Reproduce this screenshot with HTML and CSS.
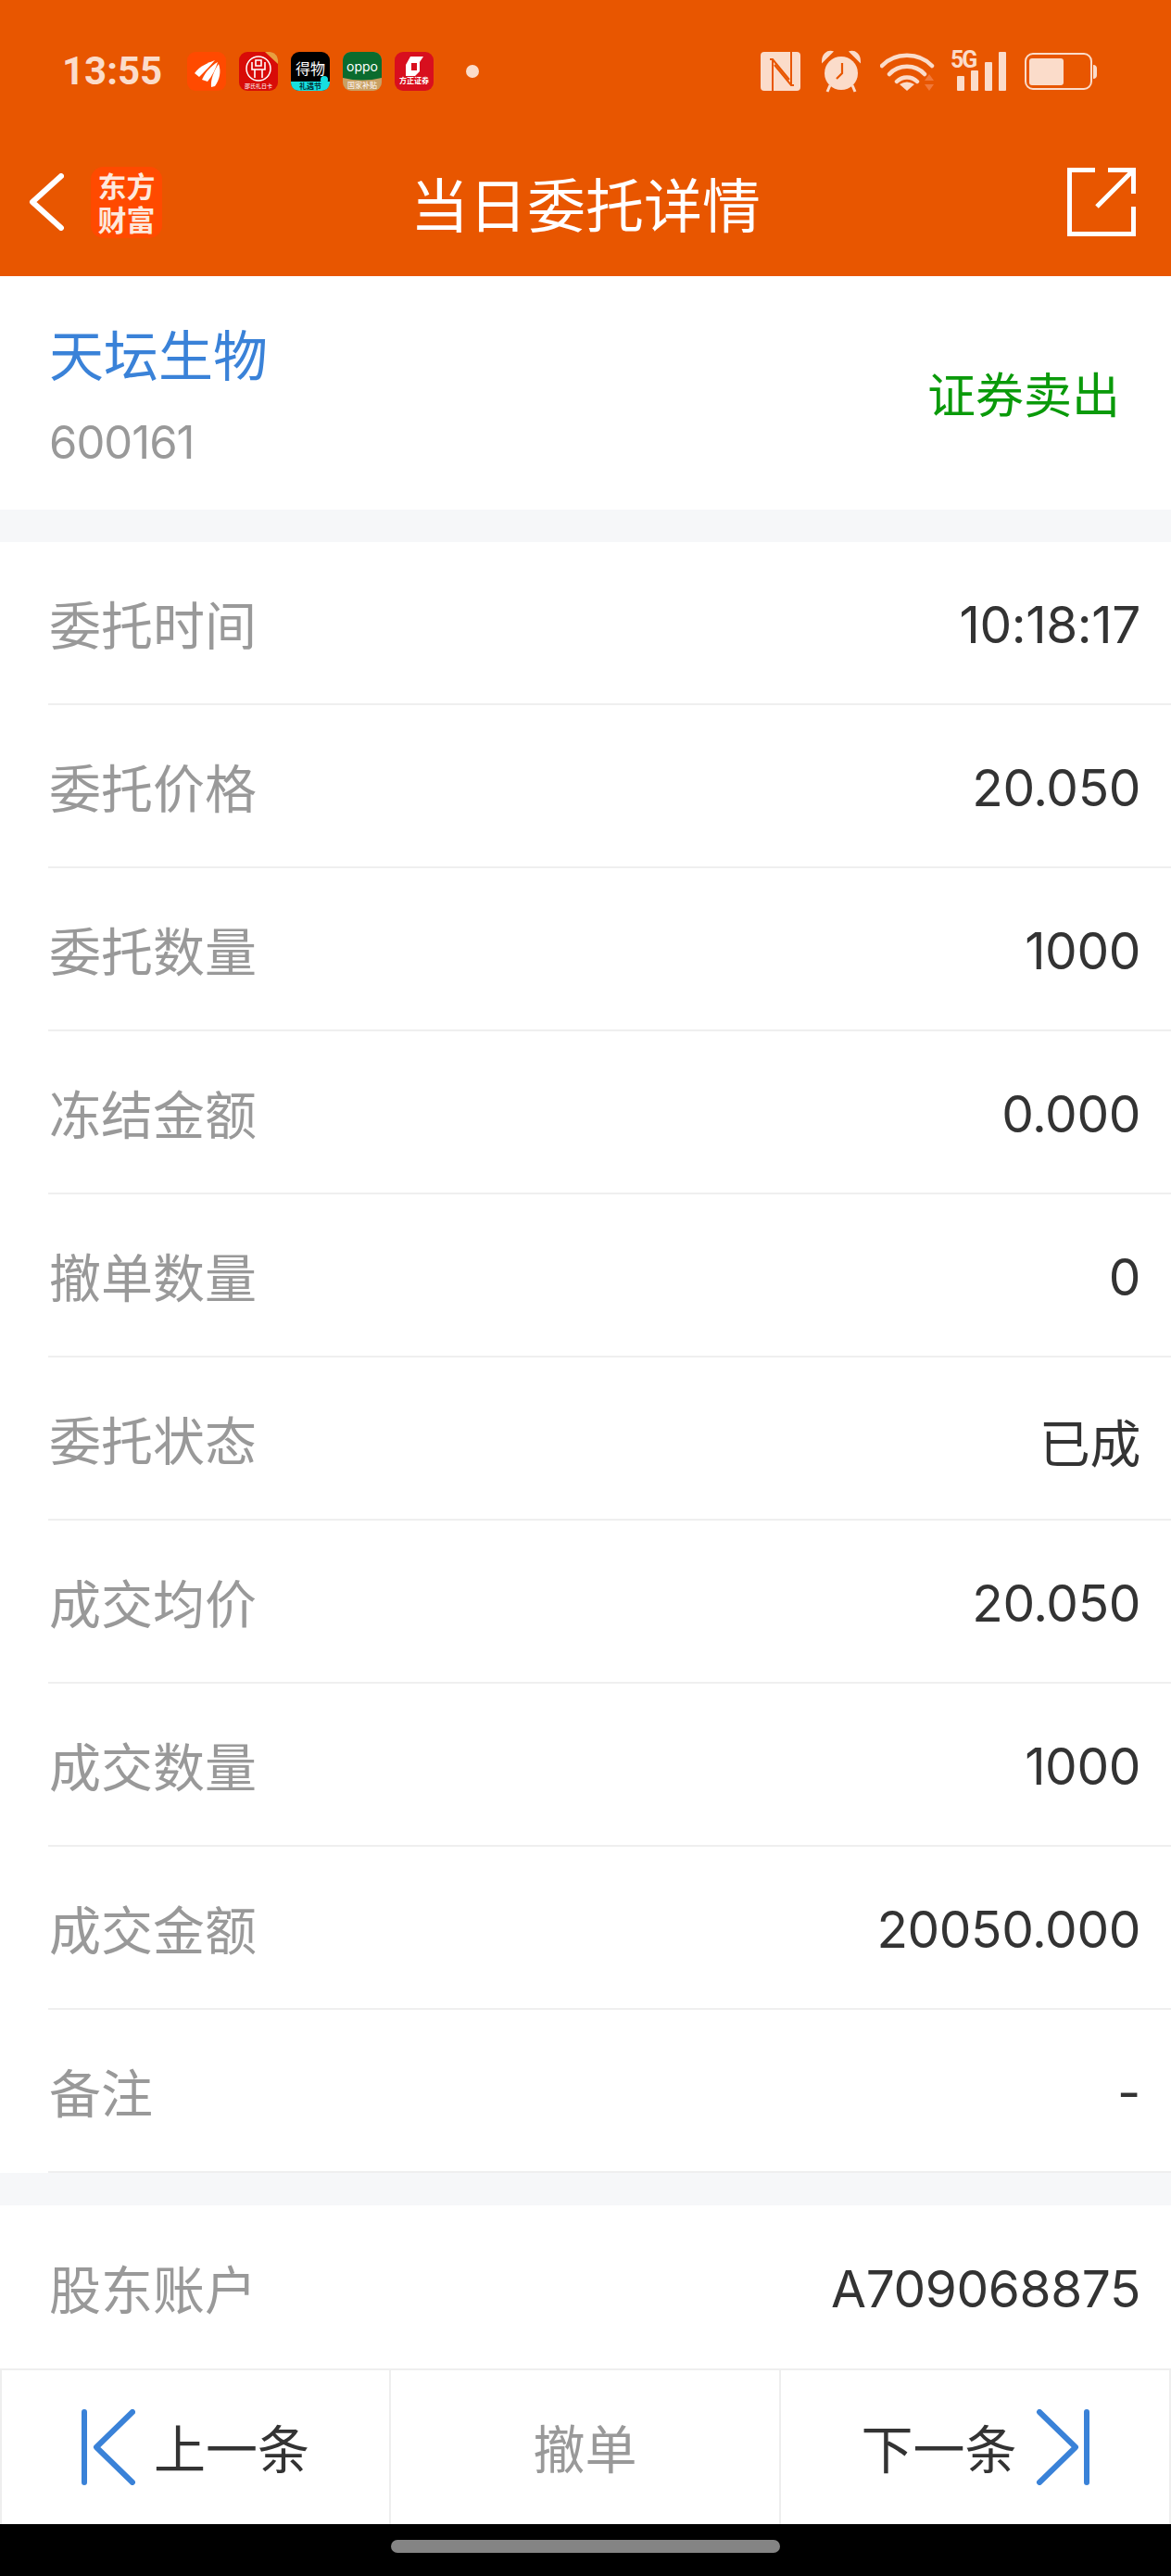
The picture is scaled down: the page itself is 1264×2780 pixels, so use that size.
FILE: index.html
```html
<!DOCTYPE html>
<html lang="zh-CN">
<head>
<meta charset="utf-8">
<title>当日委托详情</title>
<link rel="stylesheet" href="styles.css">
</head>
<body>
<div class="app">
  <header class="top">
    <div class="status">
      <span class="clock">13:55</span>
      <div class="apps">
        <svg class="app-icon" viewBox="0 0 42 42"><rect width="42" height="42" rx="9" fill="#ff4a00"/><path d="M8 23C14 15 22 12 30 9C25 15 19 21 13 27Z" fill="#fff"/><path d="M16 30C20 21 26 15 33 11C31 18 27 26 22 32Z" fill="#fff"/><path d="M26 38C25 30 29 20 34 13C37 21 35 30 30 37Z" fill="#fff"/></svg>
        <svg class="app-icon" viewBox="0 0 42 42"><rect width="42" height="42" rx="9" fill="#d80c08"/><path d="M28 0H33C38 0 42 4 42 9V13Z" fill="#e8a040"/><circle cx="21" cy="18" r="13" fill="none" stroke="#fff" stroke-width="1.5"/><path d="M14 11V19H28V11M17 19V28M25 19V28M18 9H24V15H18Z" fill="none" stroke="#fff" stroke-width="1.6"/><text class="mini" x="21" y="39" font-size="6">邵氏礼日卡</text></svg>
        <svg class="app-icon" viewBox="0 0 42 42"><rect width="42" height="42" rx="9" fill="#000"/><path d="M0 32H42V33C42 38 38 42 33 42H9C4 42 0 38 0 33Z" fill="#16dfe0"/><circle cx="36" cy="30" r="4" fill="#16dfe0"/><text class="mini" x="21" y="24" font-size="16" fill="#fff">得物</text><text class="mini dark" x="21" y="40" font-size="8">礼遇节</text></svg>
        <svg class="app-icon" viewBox="0 0 42 42"><rect width="42" height="42" rx="9" fill="#c9a063"/><path d="M0 9C0 4 4 0 9 0H33C38 0 42 4 42 9V28Q21 33 0 28Z" fill="#0b6b2e"/><text class="mini oppo" x="21" y="21" font-size="14">oppo</text><text class="mini" x="21" y="39" font-size="8">国家补贴</text></svg>
        <svg class="app-icon" viewBox="0 0 42 42"><rect width="42" height="42" rx="9" fill="#d80f1e"/><path d="M17 5H31L27 11V21L22 26H12V14Z" fill="#fff"/><path d="M18 12H24V20H18Z" fill="#d80f1e"/><text class="mini strong" x="21" y="34" font-size="8">方正证券</text></svg>
      </div>
      <span class="dot"></span>
      <div class="sys">
        <svg class="sys-nfc" viewBox="0 0 43 42"><rect width="43" height="42" rx="4" fill="#fbdcca"/><path d="M13 42V8M10 8H13L31 30M33 0V36M36 36H33L15 14" fill="none" stroke="#e85600" stroke-width="2"/></svg>
        <svg class="sys-alarm" viewBox="0 0 44 46"><path d="M2 12C2 5 7 1 12 2ZM42 12C42 5 37 1 32 2Z" fill="#fbdcca" stroke="#fbdcca" stroke-width="2"/><ellipse cx="22" cy="25" rx="18" ry="18" fill="#fbdcca"/><path d="M10 38L7 45M34 38L37 45" stroke="#fbdcca" stroke-width="3"/><path d="M23 14V25L17 31" fill="none" stroke="#e85600" stroke-width="2.2"/></svg>
        <svg class="sys-wifi" viewBox="0 0 60 44"><path d="M2 16C16 1 42 1 56 16M10 25C20 14 38 14 48 25M18 33C24 27 34 27 40 33" fill="none" stroke="#fbdcca" stroke-width="4.5" stroke-linecap="round"/><path d="M29 43L21 36Q29 31 37 36Z" fill="#fbdcca"/><path d="M53 25L58 32H48ZM53 43L48 36H58Z" fill="#f1793a"/></svg>
        <div class="sig">
          <span class="five-g">5G</span>
          <svg class="bars" viewBox="0 0 53 42"><rect y="26" width="8" height="16" rx="1" fill="#fbdcca"/><rect x="15" y="20" width="8" height="22" rx="1" fill="#fbdcca"/><rect x="30" y="11" width="8" height="31" rx="1" fill="#fbdcca"/><rect x="45" width="8" height="42" rx="1" fill="#fbdcca"/></svg>
        </div>
        <svg class="sys-bat" viewBox="0 0 78 40"><rect x="1" y="1" width="71" height="38" rx="8" fill="none" stroke="#fbdcca" stroke-width="2"/><rect x="5" y="6" width="37" height="29" rx="3" fill="#fbdcca"/><path d="M74 13C77 13 78 15 78 17V24C78 26 77 28 74 28Z" fill="#fbdcca"/></svg>
      </div>
    </div>
    <nav class="nav">
      <svg class="back" viewBox="0 0 38 62"><path d="M35 3L4 31L35 59" fill="none" stroke="#fff" stroke-width="6" stroke-linecap="round" stroke-linejoin="round"/></svg>
      <div class="logo"><span class="logo-text">东方财富</span></div>
      <h1 class="title">当日委托详情</h1>
      <svg class="share" viewBox="0 0 74 74"><path d="M30 2.5H2.5V71.5H71.5V42M32 42L71 3M44 2.5H71.5V28" fill="none" stroke="#fff" stroke-width="5"/></svg>
    </nav>
  </header>

  <section class="stock">
    <div>
      <div class="stock-name">天坛生物</div>
      <div class="stock-code">600161</div>
    </div>
    <div class="side">证券卖出</div>
  </section>

  <section class="group">
    <div class="row"><span class="label">委托时间</span><span class="value">10:18:17</span></div>
    <div class="row"><span class="label">委托价格</span><span class="value">20.050</span></div>
    <div class="row"><span class="label">委托数量</span><span class="value">1000</span></div>
    <div class="row"><span class="label">冻结金额</span><span class="value">0.000</span></div>
    <div class="row"><span class="label">撤单数量</span><span class="value">0</span></div>
    <div class="row"><span class="label">委托状态</span><span class="value">已成</span></div>
    <div class="row"><span class="label">成交均价</span><span class="value">20.050</span></div>
    <div class="row"><span class="label">成交数量</span><span class="value">1000</span></div>
    <div class="row"><span class="label">成交金额</span><span class="value">20050.000</span></div>
    <div class="row"><span class="label">备注</span><span class="value">-</span></div>
  </section>

  <section class="group">
    <div class="row row-last"><span class="label">股东账户</span><span class="value">A709068875</span></div>
  </section>

  <footer class="actions">
    <div class="action action-prev">
      <svg class="step" viewBox="0 0 58 82"><path d="M3 3V79M55 3L16 41L55 79" fill="none" stroke="#3a82d8" stroke-width="6" stroke-linecap="round" stroke-linejoin="round"/></svg>
      <span class="action-text">上一条</span>
    </div>
    <div class="action action-mid"><span class="action-text">撤单</span></div>
    <div class="action action-next">
      <span class="action-text">下一条</span>
      <svg class="step" viewBox="0 0 58 82"><path d="M55 3V79M4 3L43 41L4 79" fill="none" stroke="#3a82d8" stroke-width="6" stroke-linecap="round" stroke-linejoin="round"/></svg>
    </div>
  </footer>

  <div class="home"><span class="pill"></span></div>
</div>
</body>
</html>
```

FILE: styles.css
```css
* { box-sizing: border-box; }
html, body { margin: 0; padding: 0; }
body {
  width: 1264px;
  height: 2780px;
  overflow: hidden;
  background: #f6f7f9;
  font-family: Inter, "Noto Sans CJK SC", sans-serif;
}
.app { display: flex; flex-direction: column; height: 2780px; }

.top { background: #e85600; height: 298px; color: #fff; flex: none; }
.status {
  height: 153px;
  display: flex;
  align-items: center;
  padding: 0 80px 0 67px;
}
.clock {
  font-family: Roboto, sans-serif;
  font-weight: 700;
  font-size: 42px;
  color: #fbdcca;
  width: 135px;
  flex: none;
}
.apps { display: flex; gap: 14px; flex: none; }
.app-icon { width: 42px; height: 42px; display: block; }
.mini {
  font-family: "Noto Sans CJK SC", sans-serif;
  fill: #fff;
  text-anchor: middle;
}
.oppo { font-family: Inter, sans-serif; }
.strong { font-weight: 700; }
.dark { fill: #06363a; font-weight: 700; }
.dot {
  width: 14px;
  height: 14px;
  border-radius: 50%;
  background: #fbdcca;
  margin-left: 35px;
  flex: none;
}
.sys { display: flex; align-items: center; margin-left: auto; height: 46px; }
.sys-nfc { width: 43px; height: 42px; flex: none; }
.sys-alarm { width: 44px; height: 46px; margin-left: 22px; flex: none; }
.sys-wifi { width: 60px; height: 44px; margin-left: 20px; flex: none; }
.sig { position: relative; width: 53px; height: 42px; margin-left: 23px; flex: none; }
.bars { width: 53px; height: 42px; display: block; }
.five-g {
  position: absolute;
  left: -7px;
  top: -4px;
  font-family: Roboto, sans-serif;
  font-weight: 700;
  font-size: 25px;
  line-height: 25px;
  letter-spacing: -2px;
  color: #fbdcca;
}
.sys-bat { width: 78px; height: 40px; margin-left: 20px; flex: none; }

.nav { height: 130px; display: flex; align-items: center; padding: 0 38px 0 31px; }
.back { width: 38px; height: 62px; flex: none; }
.logo {
  width: 77px;
  height: 77px;
  margin-left: 29px;
  background: #ff4a00;
  border-radius: 14px;
  display: flex;
  align-items: center;
  justify-content: center;
  flex: none;
}
.logo-text {
  width: 62px;
  font-family: "Noto Sans CJK SC", sans-serif;
  font-weight: 700;
  font-size: 31px;
  line-height: 36px;
  color: #fde8dc;
  text-align: center;
}
.title {
  margin: 0 0 0 268px;
  font-family: "Noto Sans CJK SC", sans-serif;
  font-weight: 400;
  font-size: 63px;
  line-height: 80px;
  white-space: nowrap;
  flex: none;
}
.share { width: 74px; height: 74px; margin-left: auto; flex: none; }

.stock {
  height: 252px;
  background: #fff;
  display: flex;
  align-items: center;
  justify-content: space-between;
  padding: 0 55px 0 53px;
  flex: none;
}
.stock-name {
  font-family: "Noto Sans CJK SC", sans-serif;
  font-size: 59px;
  line-height: 84px;
  color: #3a82d8;
}
.stock-code {
  font-size: 49px;
  letter-spacing: -1px;
  line-height: 62px;
  color: #999;
  margin-top: 24px;
}
.side {
  font-family: "Noto Sans CJK SC", sans-serif;
  font-size: 52px;
  line-height: 70px;
  color: #0a9a0a;
}

.group { background: #fff; margin-top: 35px; flex: none; }
.row {
  height: 176px;
  margin-left: 52px;
  padding: 0 33px 2px 1px;
  border-bottom: 2px solid #efefef;
  display: flex;
  align-items: center;
  justify-content: space-between;
}
.row-last { border-bottom: 0; }
.label {
  font-family: "Noto Sans CJK SC", sans-serif;
  font-size: 56px;
  color: #999;
}
.value {
  font-size: 55px;
  letter-spacing: -0.4px;
  color: #333;
  margin-top: 6px;
}

.actions {
  height: 168px;
  background: #fff;
  border-top: 2px solid #eee;
  display: grid;
  grid-template-columns: 422px 421px 421px;
  flex: none;
}
.action {
  display: flex;
  align-items: center;
  justify-content: center;
  gap: 20px;
  font-family: "Noto Sans CJK SC", sans-serif;
  font-size: 56px;
  color: #333;
  border-right: 2px solid #eee;
}
.action-text { margin-bottom: 4px; }
.action-prev { border-left: 2px solid #eee; }
.action-mid { color: #999; }
.step { width: 58px; height: 82px; flex: none; }

.home {
  flex: 1;
  background: #000;
  display: flex;
  justify-content: center;
  padding-top: 17px;
}
.pill { width: 420px; height: 14px; border-radius: 7px; background: #848484; }
```
